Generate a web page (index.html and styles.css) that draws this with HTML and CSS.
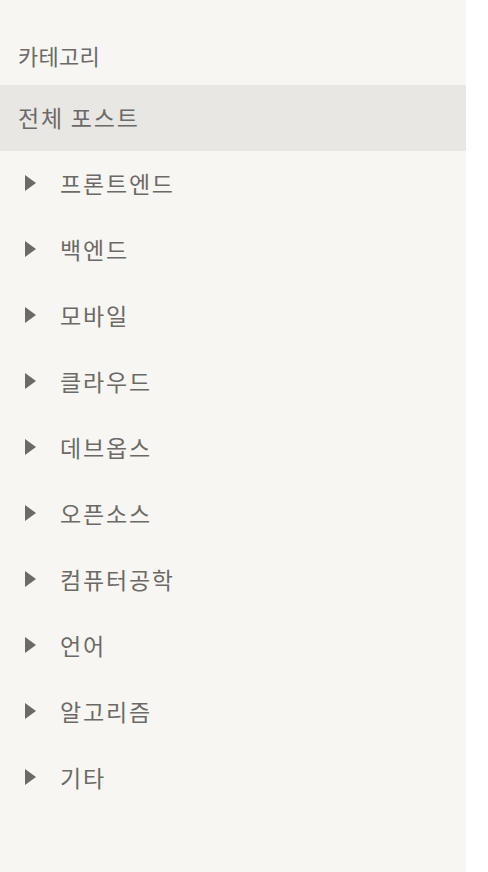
FILE: index.html
```html
<!DOCTYPE html>
<html>
	<head>
		<meta charset="utf-8">
		<title>카테고리</title>
		<link rel="stylesheet" href="styles.css">
	</head>
	<body>
		<nav class="sidebar">
			<p class="sidebar-title">카테고리</p>
			<ul class="category-list">
				<li class="category-all active">전체 포스트</li>
				<li class="category-item"><span class="arrow"></span>프론트엔드</li>
				<li class="category-item"><span class="arrow"></span>백엔드</li>
				<li class="category-item"><span class="arrow"></span>모바일</li>
				<li class="category-item"><span class="arrow"></span>클라우드</li>
				<li class="category-item"><span class="arrow"></span>데브옵스</li>
				<li class="category-item"><span class="arrow"></span>오픈소스</li>
				<li class="category-item"><span class="arrow"></span>컴퓨터공학</li>
				<li class="category-item"><span class="arrow"></span>언어</li>
				<li class="category-item"><span class="arrow"></span>알고리즘</li>
				<li class="category-item"><span class="arrow"></span>기타</li>
			</ul>
		</nav>
	</body>
</html>
```
FILE: styles.css
```css
html, body{
	margin: 0;
	height: 100%;
	background: #fff;
}
body{
	font-family: "Noto Sans CJK KR", "Noto Sans", sans-serif;
	color: #6b6a67;
}
.sidebar{
	width: 466px;
	height: 100%;
	background: #f7f6f3;
	padding-top: 36px;
	box-sizing: border-box;
}
.sidebar-title{
	margin: 0;
	padding: 0 18px;
	height: 49px;
	line-height: 38px;
	font-size: 22px;
	letter-spacing: 0.3px;
}
.category-list{
	margin: 0;
	padding: 0;
	list-style: none;
}
.category-list li{
	display: flex;
	align-items: center;
	box-sizing: border-box;
	height: 66px;
	padding-bottom: 3px;
	font-size: 23px;
	letter-spacing: 1.8px;
}
.category-all{
	padding-left: 18px;
}
.category-all.active{
	background: #e8e7e4;
}
.category-item{
	padding-left: 25px;
}
.arrow{
	width: 0;
	height: 0;
	border-top: 8px solid transparent;
	border-bottom: 8px solid transparent;
	border-left: 11px solid #6b6a67;
	margin-right: 24px;
}
```
